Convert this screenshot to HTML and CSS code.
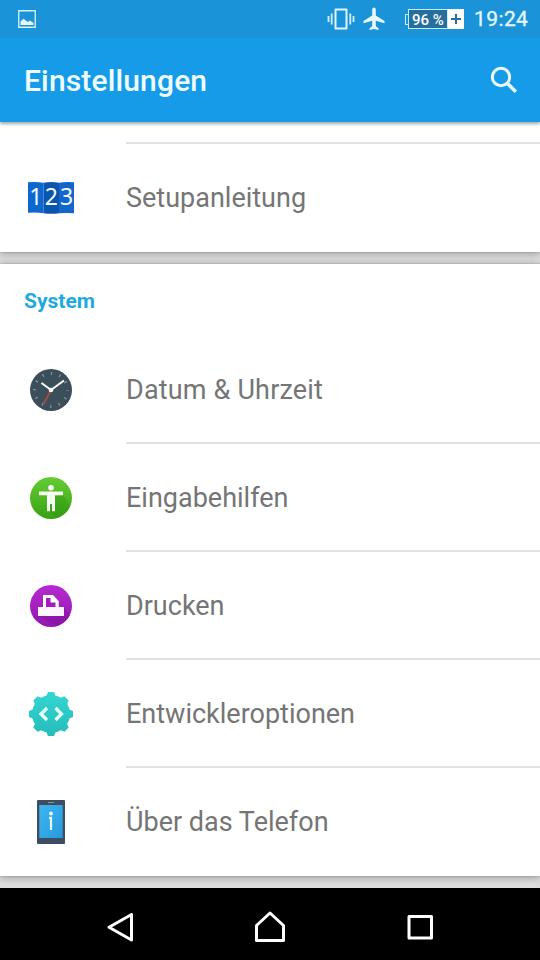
FILE: index.html
```html
<!DOCTYPE html>
<html lang="de">
<head>
<meta charset="utf-8">
<title>Einstellungen</title>
<link rel="stylesheet" href="styles.css">
</head>
<body>
<div class="screen">
  <header class="top">
    <div class="status">
      <svg class="st-image" width="18" height="18" viewBox="0 0 18 18"><path d="M.75.75h16.5v16.5H.75z" fill="none" stroke="#d8f3fd" stroke-width="1.300"/><path d="M2.500 15v-3.500l3-2.800 3 2.300 1.500 1 2-1.500 3.500 2.500v2z" fill="#e8faff"/></svg>
      <svg class="st-vibrate" width="28" height="22" viewBox="0 0 28 22"><path d="M8.500 1.500h11v19h-11z" fill="none" stroke="#e4f6fd" stroke-width="2" stroke-linejoin="round"/><path d="M4.700 5.500v11M1.500 8v6M23.300 5.500v11M26.500 8v6" stroke="#d3effb" stroke-width="1.800"/></svg>
      <svg class="st-plane" width="22" height="24" viewBox="0 0 22 24"><path d="M11 .5c1.200 0 1.800 1 1.800 2v6L21.500 14v2.300l-8.700-2.600v5.600l2.700 2v1.800L11 22l-4.500 1.100v-1.800l2.700-2v-5.600L.5 16.300V14l8.700-5.500v-6c0-1 .6-2 1.800-2z" fill="#e8f8ff"/></svg>
      <div class="battery"><span class="tip"></span><span class="level">96 %</span><svg width="16" height="20" viewBox="0 0 16 20"><path d="M0 0h16v20H0z" fill="#fff"/><path d="M8 5v10M3 10h10" stroke="#266e9d" stroke-width="2"/></svg></div>
      <span class="time">19:24</span>
    </div>
    <div class="appbar">
      <h1>Einstellungen</h1>
      <svg width="28" height="28" viewBox="0 0 28 28" fill="none" stroke="#e9fbff"><circle cx="11" cy="11" r="8.700" stroke-width="3"/><path d="M17.500 17.500l8.300 8.300" stroke-width="3.500"/></svg>
    </div>
  </header>
  <main>
    <section class="card first">
      <div class="row">
        <svg class="icon" viewBox="0 0 48 48"><path d="M1 8.300q8-.8 15.500.4v30.500q-7.500-1.200-15.500-.4z" fill="#0c67cf"/><path d="M16.500 8.700q8-1.200 15.500 0v30.500q-7.500 1.200-15.500 0z" fill="#0c55af"/><path d="M32 8.700q7.500-1.200 15-.4v31q-7-.8-15 0z" fill="#1266cc"/><text class="digits" y="31.300"><tspan x="2.300">1</tspan><tspan x="17.700">2</tspan><tspan x="33">3</tspan></text></svg>
        <span class="label">Setupanleitung</span>
      </div>
    </section>
    <section class="card">
      <h2>System</h2>
      <div class="row">
        <svg class="icon" viewBox="0 0 48 48"><circle cx="24" cy="24" r="21" fill="#3d4e5b"/><circle cx="24" cy="24" r="16.500" fill="none" stroke="#8298a6" stroke-width="3" stroke-dasharray="1.200 7.439" stroke-dashoffset=".6"/><path d="M24 24l-7.500 14" stroke="#a84e45" stroke-width="1.700"/><path d="M24 24l-9.500-7M24 24l13-9.500" stroke="#f5ffff" stroke-width="2"/><circle cx="24" cy="24" r="2.300" fill="#fff"/></svg>
        <span class="label line date">Datum &amp; Uhrzeit</span>
      </div>
      <div class="row">
        <svg class="icon" viewBox="0 0 48 48"><defs><linearGradient id="green" x2="0" y2="1"><stop stop-color="#65cd32"/><stop offset="1" stop-color="#38a114"/></linearGradient></defs><circle cx="24" cy="24" r="21" fill="url(#green)"/><path d="M28 22l8-1 7 11a21 21 0 0 1-13 12l-9-7z" fill="#2b8e10" opacity=".3"/><circle cx="24" cy="13.700" r="2.800" fill="#fff"/><path d="M12 17.500h24v3.800h-8v16h-3V30h-2v7.300h-3v-16h-8z" fill="#f6fff1"/></svg>
        <span class="label line">Eingabehilfen</span>
      </div>
      <div class="row">
        <svg class="icon" viewBox="0 0 48 48"><defs><linearGradient id="purple" x2="0" y2="1"><stop stop-color="#b52ad0"/><stop offset="1" stop-color="#9218ad"/></linearGradient></defs><circle cx="24" cy="24" r="21" fill="url(#purple)"/><path d="M37 25l6 8a21 21 0 0 1-13 11L11 34z" fill="#780f95" opacity=".35"/><path d="M16 26V13h10l5.700 6v7z" fill="#fff"/><path d="M19 25V16h4.500v4.500h5V25z" fill="#a31cbd"/><path d="M11 25h26v9H11z" fill="#fff5ff"/></svg>
        <span class="label line">Drucken</span>
      </div>
      <div class="row">
        <svg class="icon" viewBox="0 0 48 48"><defs><linearGradient id="teal" x2="0" y2="1"><stop stop-color="#35d7d2"/><stop offset="1" stop-color="#24bbb9"/></linearGradient><clipPath id="gear"><circle cx="24" cy="24" r="19"/><path d="M19 7l2-5h6l2 5v34l-2 5h-6l-2-5z"/><path d="M19 7l2-5h6l2 5v34l-2 5h-6l-2-5z" transform="rotate(45 24 24)"/><path d="M19 7l2-5h6l2 5v34l-2 5h-6l-2-5z" transform="rotate(90 24 24)"/><path d="M19 7l2-5h6l2 5v34l-2 5h-6l-2-5z" transform="rotate(135 24 24)"/></clipPath></defs><path d="M0 0h48v48H0z" fill="url(#teal)" clip-path="url(#gear)"/><path d="M20 18l-6 6 6 6M28.500 18l6 6-6 6" fill="none" stroke="#e9fffd" stroke-width="3.300"/></svg>
        <span class="label line">Entwickleroptionen</span>
      </div>
      <div class="row">
        <svg class="icon" viewBox="0 0 48 48"><defs><linearGradient id="blue" x2="1" y2="1"><stop stop-color="#3fb6f1"/><stop offset="1" stop-color="#249ade"/></linearGradient></defs><rect x="10" y="2" width="28" height="44" rx="1" fill="#3e4d60"/><path d="M12.300 7h23.400v33H12.300z" fill="url(#blue)"/><path d="M21 4.500h6" stroke="#8794a1"/><circle cx="24" cy="15.500" r="1.900" fill="#eaffff"/><path d="M22 19.800H24V32" fill="none" stroke="#eaffff" stroke-width="2.200"/></svg>
        <span class="label">Über das Telefon</span>
      </div>
    </section>
  </main>
  <nav class="nav">
    <svg width="30" height="32" viewBox="0 0 30 32"><path d="M26.500 3.500v25.500L4 16.200z"/></svg>
    <svg width="30" height="32" viewBox="0 0 30 32"><path d="M15 2l13.500 12.500v15h-27v-15z"/></svg>
    <svg width="30" height="32" viewBox="0 0 30 32"><path d="M4 5.500h22.500v21.500H4z"/></svg>
  </nav>
</div>
</body>
</html>
```

FILE: styles.css
```css
* { box-sizing: border-box; }
body { margin: 0; font-family: Roboto, "Liberation Sans", sans-serif; }
.screen { width: 540px; height: 960px; display: flex; flex-direction: column; overflow: hidden; background: #dedede; }
.top { height: 122px; flex: none; background: #159be8; position: relative; z-index: 1; box-shadow: 0 2px 3px rgba(0, 0, 0, .35); }
.status { height: 38px; display: flex; align-items: center; padding: 0 12px 0 18px; background: #1b93d8; }
.status svg { flex: none; }
.st-vibrate { margin-left: auto; }
.st-plane { margin: -1px 19px 0 9px; }
.battery { display: flex; align-items: center; height: 20px; width: 59px; }
.tip { width: 3px; height: 11px; border: 1px solid #c5effc; border-right: 0; }
.level { width: 40px; height: 20px; border: 1px solid #c5effc; background: #266e9d; color: #fff; font-size: 15px; font-weight: 500; line-height: 20px; text-align: center; white-space: nowrap; }
.time { width: 54px; margin-left: 11px; color: #e6f8ff; font-size: 21px; line-height: 40px; letter-spacing: .4px; text-align: right; -webkit-text-stroke: .3px #e6f8ff; }
.st-vibrate, .battery { position: relative; left: 1px; }
.appbar { height: 84px; padding: 0 22px 0 24px; display: flex; align-items: center; justify-content: space-between; }
h1 { margin: 2px 0 0; color: #effcff; font-size: 30px; font-weight: 500; line-height: 84px; letter-spacing: .15px; }
.card { background: #fff; box-shadow: 0 1px 8px rgba(0, 0, 0, .36), 0 0 1px rgba(0, 0, 0, .3); }
.card + .card { margin-top: 12px; }
.first { height: 130px; padding-top: 20px; }
.first::before { content: ""; display: block; height: 2px; margin-left: 126px; background: #e2e2e2; }
h2 { margin: 0; height: 72px; padding-left: 24px; color: #1ea9e1; font-size: 21px; font-weight: 700; line-height: 74px; }
.row { height: 108px; display: flex; align-items: center; }
.icon { width: 48px; height: 48px; margin: 0 51px 0 27px; flex: none; }
.label { flex: 1; height: 108px; line-height: 108px; font-size: 27px; color: #757575; }
.line { border-bottom: 2px solid #e2e2e2; }
.date { letter-spacing: .18px; }
.digits { font: 23px "Noto Sans", sans-serif; fill: #f0fbff; }
.nav { height: 72px; flex: none; margin-top: 12px; padding: 5px 105px 0; display: flex; align-items: center; justify-content: space-between; background: #000; position: relative; z-index: 1; }
.nav svg { fill: none; stroke: #fff; stroke-width: 3; stroke-linejoin: round; }
```
